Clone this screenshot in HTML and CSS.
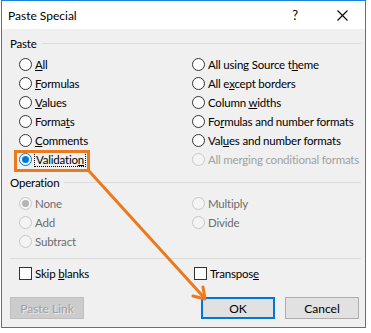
FILE: index.html
```html
<!DOCTYPE html>
<html lang="en">
<head>
    <meta charset="UTF-8">
    <title>Paste Special</title>
    <link rel="stylesheet" href="styles.css">
</head>
<body>
    <div class="window">
        <div class="titlebar">
            <span class="title">Paste Special</span>
            <span class="help">?</span>
            <span class="close">
                <svg width="11" height="11" viewBox="0 0 11 11"><path d="M0.5 0.5 L10.5 10.5 M10.5 0.5 L0.5 10.5" stroke="#000" stroke-width="1.1" fill="none"/></svg>
            </span>
        </div>
        <div class="content">
            <div class="group-title"><span>Paste</span><i></i></div>
            <div class="options">
                <label class="opt"><span class="radio"></span><span><u>A</u>ll</span></label>
                <label class="opt"><span class="radio"></span><span>All using Source t<u>h</u>eme</span></label>
                <label class="opt"><span class="radio"></span><span><u>F</u>ormulas</span></label>
                <label class="opt"><span class="radio"></span><span>All e<u>x</u>cept borders</span></label>
                <label class="opt"><span class="radio"></span><span><u>V</u>alues</span></label>
                <label class="opt"><span class="radio"></span><span>Column <u>w</u>idths</span></label>
                <label class="opt"><span class="radio"></span><span>Forma<u>t</u>s</span></label>
                <label class="opt"><span class="radio"></span><span>Fo<u>r</u>mulas and number formats</span></label>
                <label class="opt"><span class="radio"></span><span><u>C</u>omments</span></label>
                <label class="opt"><span class="radio"></span><span>Val<u>u</u>es and number formats</span></label>
                <label class="opt"><span class="radio checked"></span><span class="focus">Validatio<u>n</u></span></label>
                <label class="opt faint"><span class="radio off"></span><span>All merging conditional formats</span></label>
            </div>

            <div class="group-title"><span>Operation</span><i></i></div>
            <div class="options">
                <label class="opt grey"><span class="radio off dot"></span><span>None</span></label>
                <label class="opt grey"><span class="radio off"></span><span>Multiply</span></label>
                <label class="opt grey"><span class="radio off"></span><span>Add</span></label>
                <label class="opt grey"><span class="radio off"></span><span>Divide</span></label>
                <label class="opt grey"><span class="radio off"></span><span>Subtract</span></label>
            </div>

            <div class="divider"></div>

            <div class="checks">
                <label class="opt"><span class="box"></span><span>Skip <u>b</u>lanks</span></label>
                <label class="opt"><span class="box"></span><span>Transpos<u>e</u></span></label>
            </div>

            <div class="buttons">
                <button class="btn disabled">Paste Link</button>
                <button class="btn default">OK</button>
                <button class="btn">Cancel</button>
            </div>
        </div>
    </div>

    <!-- callout drawn over the dialog -->
    <svg class="callout" width="371" height="333" viewBox="0 0 371 333">
        <rect x="15.5" y="151.5" width="73" height="19" fill="none" stroke="#ec7a1c" stroke-width="3"/>
        <path d="M89 171 L204.5 298" stroke="#ec7a1c" stroke-width="3" fill="none"/>
        <path d="M193 296 L205 299 L203 287" stroke="#ec7a1c" stroke-width="3" fill="none" stroke-linecap="round" stroke-linejoin="round"/>
    </svg>
</body>
</html>
```

FILE: styles.css
```css
body {
    margin: 0;
    background-color: #ffffff;
    font-family: "Segoe UI", Lato, "Liberation Sans", sans-serif;
    font-size: 11.5px;
    letter-spacing: -0.2px;
    color: #000;
    position: relative;
}
.window {
    margin-left: 1px;
    width: 365px;
    height: 328px;
    border: 1px solid #1883d7;
    box-sizing: border-box;
    display: flex;
    flex-direction: column;
}
.titlebar {
    height: 28px;
    background-color: #fff;
    display: flex;
    align-items: center;
    padding-left: 6px;
}
.title {
    flex: 1;
    font-size: 12px;
    letter-spacing: 0;
}
.help {
    width: 14px;
    font-size: 13px;
    margin-right: 35px;
    text-align: center;
}
.close {
    display: flex;
    margin-right: 17px;
}
.content {
    flex: 1;
    background-color: #f0f0f0;
    padding: 6px 4px 0 8px;
}
.group-title {
    display: flex;
    align-items: center;
    height: 16px;
    margin-bottom: 4px;
}
.group-title i {
    flex: 1;
    height: 0;
    border-top: 1px solid #dcdcdc;
    margin-left: 5px;
}
.options {
    display: grid;
    grid-template-columns: 173px 1fr;
    grid-auto-rows: 19px;
    padding-left: 9px;
    margin-bottom: 5px;
}
.opt {
    display: flex;
    align-items: center;
    gap: 3px;
    white-space: nowrap;
}
.radio {
    width: 13px;
    height: 13px;
    border: 1px solid #333;
    border-radius: 50%;
    background-color: #fff;
    box-sizing: border-box;
    display: flex;
    align-items: center;
    justify-content: center;
}
.radio.checked {
    border-color: #0078d7;
}
.radio.checked::after {
    content: "";
    width: 7px;
    height: 7px;
    border-radius: 50%;
    background-color: #0078d7;
}
.radio.off {
    border-color: #c8c8c8;
    background-color: #f4f4f4;
}
.radio.dot::after {
    content: "";
    width: 7px;
    height: 7px;
    border-radius: 50%;
    background-color: #b4b4b4;
}
.focus {
    outline: 1px dotted #000;
    padding: 0 1px;
}
.faint {
    color: #a0a0a0;
}
.grey {
    color: #6d6d6d;
}
.divider {
    border-top: 1px solid #dcdcdc;
    margin: 7px 0 5px 0;
}
.checks {
    display: grid;
    grid-template-columns: 175px 1fr;
    height: 19px;
    padding-left: 9px;
}
.box {
    width: 13px;
    height: 13px;
    border: 1px solid #333;
    background-color: #fff;
    box-sizing: border-box;
}
.buttons {
    display: flex;
    gap: 10px;
    margin-top: 14px;
    padding-right: 2px;
}
.btn {
    width: 74px;
    height: 22px;
    font-family: inherit;
    font-size: 12px;
    letter-spacing: 0;
    color: #000;
    background-color: #e1e1e1;
    border: 1px solid #adadad;
    padding: 0;
}
.btn.disabled {
    margin-right: auto;
    background-color: #cccccc;
    border-color: #bfbfbf;
    color: #a0a0a0;
    text-shadow: 1px 1px 0 #eaeaea;
}
.btn.default {
    border: 2px solid #0078d7;
}
.callout {
    position: absolute;
    top: 0;
    left: 0;
    pointer-events: none;
}
```
